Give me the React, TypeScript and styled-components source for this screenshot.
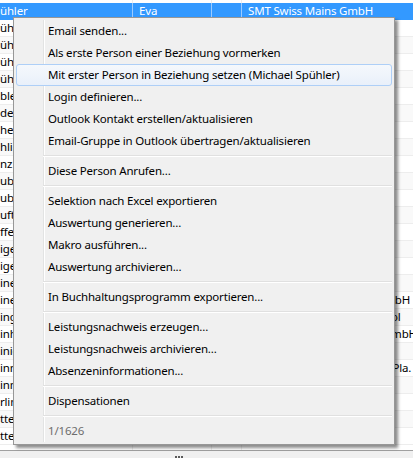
import React from 'react';
import styled, { createGlobalStyle, css } from 'styled-components';

const GlobalStyle = createGlobalStyle`
  html, body {
    margin: 0;
    padding: 0;
    background: #ffffff;
  }
  body {
    font-family: "Noto Sans", "Open Sans", "Liberation Sans", sans-serif;
    font-size: 11.5px;
    letter-spacing: -0.18px;
    overflow: hidden;
  }
`;

const Screen = styled.div`
  position: relative;
  width: 413px;
  height: 458px;
  overflow: hidden;
  background: #ffffff;
  display: flex;
  flex-direction: column;
`;

const columns = '133px 79px 30px 1fr';

const TopStrip = styled.div`
  display: grid;
  grid-template-columns: ${columns};
  height: 3px;
  flex: none;
`;

const Row = styled.div<{ $selected?: boolean; $odd?: boolean }>`
  display: grid;
  grid-template-columns: ${columns};
  height: 17px;
  flex: none;
  box-sizing: border-box;
  border-bottom: 1px solid #ededed;
  background: ${({ $odd }) => ($odd ? '#f9f9f9' : '#ffffff')};
  color: #000000;
  ${({ $selected }) =>
    $selected &&
    css`
      background: #3399ff;
      border-bottom-color: #3399ff;
      color: #ffffff;
    `}
`;

const Cell = styled.div<{ $light?: boolean }>`
  box-sizing: border-box;
  border-right: 1px solid ${({ $light }) => ($light ? '#9ccbff' : '#ededed')};
  padding: 0 6px;
  line-height: 16px;
  white-space: nowrap;
  overflow: hidden;
  &:first-child {
    padding-left: 0;
  }
  &:last-child {
    border-right: none;
  }
`;

const FillRow = styled(Row)`
  height: 6px;
  border-bottom: 1px solid #a0a0a0;
`;

const StatusBar = styled.div`
  flex: 1;
  background: #f0f0f0;
  display: flex;
  justify-content: center;
  align-items: flex-end;
  padding-right: 56px;
`;

const Grip = styled.div`
  display: flex;
  gap: 1px;
  span {
    width: 2px;
    height: 2px;
    background: #5a5a5a;
  }
`;

const Menu = styled.div`
  position: absolute;
  left: 13px;
  top: 17px;
  width: 382px;
  box-sizing: border-box;
  border: 1px solid #979797;
  background: #f0f0f0;
  padding: 2px;
  box-shadow: 3px 3px 3px rgba(0, 0, 0, 0.45);
`;

const MenuList = styled.div`
  display: flex;
  flex-direction: column;
  background: linear-gradient(
    to right,
    #f0f0f0 27px,
    #e2e3e3 27px,
    #e2e3e3 28px,
    #ffffff 28px,
    #ffffff 29px,
    #f0f0f0 29px
  );
`;

const Item = styled.div<{ $active?: boolean; $disabled?: boolean }>`
  height: 22px;
  box-sizing: border-box;
  border: 1px solid transparent;
  border-radius: 3px;
  padding-left: 31px;
  line-height: 20px;
  color: ${({ $disabled }) => ($disabled ? '#6d6d6d' : '#000000')};
  white-space: nowrap;
  ${({ $active }) =>
    $active &&
    css`
      border-color: #aecff7;
      background: linear-gradient(to bottom, #f5f8fc, #e9f0fa);
    `}
`;

const Separator = styled.div`
  height: 8px;
  margin-left: 27px;
  display: flex;
  flex-direction: column;
  justify-content: center;
  &::before {
    content: '';
    height: 1px;
    background: #e0e0e0;
  }
  &::after {
    content: '';
    height: 1px;
    background: #ffffff;
  }
`;

type Entry = { label: string; active?: boolean; disabled?: boolean } | 'sep';

const entries: Entry[] = [
  { label: 'Email senden...' },
  { label: 'Als erste Person einer Beziehung vormerken' },
  { label: 'Mit erster Person in Beziehung setzen (Michael Spühler)', active: true },
  { label: 'Login definieren...' },
  { label: 'Outlook Kontakt erstellen/aktualisieren' },
  { label: 'Email-Gruppe in Outlook übertragen/aktualisieren' },
  'sep',
  { label: 'Diese Person Anrufen...' },
  'sep',
  { label: 'Selektion nach Excel exportieren' },
  { label: 'Auswertung generieren...' },
  { label: 'Makro ausführen...' },
  { label: 'Auswertung archivieren...' },
  'sep',
  { label: 'In Buchhaltungsprogramm exportieren...' },
  'sep',
  { label: 'Leistungsnachweis erzeugen...' },
  { label: 'Leistungsnachweis archivieren...' },
  { label: 'Absenzeninformationen...' },
  'sep',
  { label: 'Dispensationen' },
  'sep',
  { label: '1/1626', disabled: true },
];

const rows: [string, string, string][] = [
  ['ühler', 'Eva', 'SMT Swiss Mains GmbH'],
  ['ühler', 'Michael', ''],
  ['ühler', 'Anna', ''],
  ['ühler', 'Peter', ''],
  ['ühler', 'Ruth', ''],
  ['bler', 'Hans', ''],
  ['der', 'Marco', ''],
  ['herer', 'Urs', ''],
  ['hlin', 'Karin', ''],
  ['nz', 'Beat', ''],
  ['uber', 'Daniel', ''],
  ['uber', 'Monika', ''],
  ['uft', 'Thomas', ''],
  ['ffer', 'Sandra', ''],
  ['iger', 'Martin', ''],
  ['iger', 'Claudia', ''],
  ['iner', 'Stefan', ''],
  ['iner', 'Reto', 'Treuhand und Revisions GmbH'],
  ['inger', 'Roland', 'Kantonsschule Baden Capitol'],
  ['inhart', 'Sabine', 'Schweiz. Energie-Holding GmbH'],
  ['iniger', 'Bruno', ''],
  ['inner', 'Heidi', 'Gesundheitszentrum Uster Pla.'],
  ['inner', 'Lukas', ''],
  ['rlin', 'Nicole', ''],
  ['tter', 'Simon', ''],
  ['tter', 'Markus', ''],
];

const App: React.FC = () => {
  return (
    <>
      <GlobalStyle />
      <Screen>
        <TopStrip>
          <Cell />
          <Cell />
          <Cell />
          <Cell />
        </TopStrip>
        {rows.map((r, i) => (
          <Row key={i} $selected={i === 0} $odd={i % 2 === 0}>
            <Cell $light={i === 0}>{r[0]}</Cell>
            <Cell $light={i === 0}>{r[1]}</Cell>
            <Cell $light={i === 0} />
            <Cell $light={i === 0}>{r[2]}</Cell>
          </Row>
        ))}
        <FillRow>
          <Cell />
          <Cell />
          <Cell />
          <Cell />
        </FillRow>
        <StatusBar>
          <Grip>
            <span />
            <span />
            <span />
          </Grip>
        </StatusBar>

        <Menu>
          <MenuList>
            {entries.map((e, i) =>
              e === 'sep' ? (
                <Separator key={i} />
              ) : (
                <Item key={i} $active={e.active} $disabled={e.disabled}>
                  {e.label}
                </Item>
              )
            )}
          </MenuList>
        </Menu>
      </Screen>
    </>
  );
};

export default App;
